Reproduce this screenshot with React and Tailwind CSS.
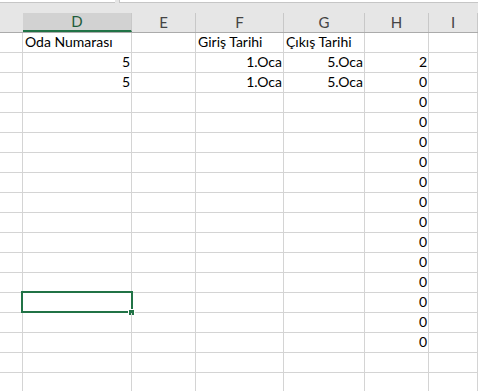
import React from 'react';

const cols = [
  { key: 'C', w: 'w-[23px]' },
  { key: 'D', w: 'w-[109px]' },
  { key: 'E', w: 'w-[64px]' },
  { key: 'F', w: 'w-[88px]' },
  { key: 'G', w: 'w-[81px]' },
  { key: 'H', w: 'w-[64px]' },
  { key: 'I', w: 'flex-1' },
];

// cell contents per row: [text, align]
const rows = [
  { D: ['Oda Numarası', 'l'], F: ['Giriş Tarihi', 'l'], G: ['Çıkış Tarihi', 'l'] },
  { D: ['5', 'r'], F: ['1.Oca', 'r'], G: ['5.Oca', 'r'], H: ['2', 'r'] },
  { D: ['5', 'r'], F: ['1.Oca', 'r'], G: ['5.Oca', 'r'], H: ['0', 'r'] },
];
for (let i = 0; i < 13; i++) rows.push({ H: ['0', 'r'] });
rows.push({}, {});

const SELECTED_ROW = 13;

function Cell({ col, value, selected }) {
  return (
    <div
      className={`${col.w} shrink-0 h-full border-r border-[#d4d4d4] relative flex items-end pb-[1px] overflow-visible whitespace-nowrap ${
        value && value[1] === 'r' ? 'justify-end pr-[1px]' : 'justify-start pl-[2px]'
      }`}
    >
      {value && <span className="leading-[18px]">{value[0]}</span>}
      {selected && (
        <>
          <div className="absolute left-[-2px] top-[-2px] right-[-2px] bottom-[-1px] border-2 border-[#217346] pointer-events-none" />
          <div className="absolute right-[-4px] bottom-[-4px] w-[5px] h-[5px] bg-[#217346] border border-white box-content" />
        </>
      )}
    </div>
  );
}

export default function App() {
  return (
    <div
      className="w-[478px] h-[391px] overflow-hidden bg-white text-black text-[14px]"
      style={{ fontFamily: 'Lato, "Open Sans", sans-serif' }}
    >
      {/* formula bar remnants */}
      <div className="h-[13px] bg-[#e6e6e6] flex gap-[4px]">
        <div className="w-[115px] h-[3px] bg-white border-b border-[#c6c6c6]" />
        <div className="flex-1 h-[3px] bg-white border-b border-l border-[#c6c6c6]" />
      </div>

      {/* column headers */}
      <div className="h-[20px] flex bg-[#e6e6e6] border-b border-[#ababab] text-[#444] text-[15px]">
        {cols.map((c) => (
          <div
            key={c.key}
            className={`${c.w} shrink-0 h-full flex items-center justify-center ${
              c.key === 'C' ? '' : 'border-r border-[#c8c8c8]'
            } ${c.key === 'D' ? 'bg-[#d2d2d2] text-[#1e5c3a] border-b-2 border-b-[#217346]' : ''}`}
          >
            {c.key === 'C' ? '' : c.key}
          </div>
        ))}
      </div>

      {rows.map((r, i) => (
        <div key={i} className="h-[20px] flex border-b border-[#d4d4d4]">
          {cols.map((c) => (
            <Cell
              key={c.key}
              col={c}
              value={r[c.key]}
              selected={i === SELECTED_ROW && c.key === 'D'}
            />
          ))}
        </div>
      ))}
    </div>
  );
}
